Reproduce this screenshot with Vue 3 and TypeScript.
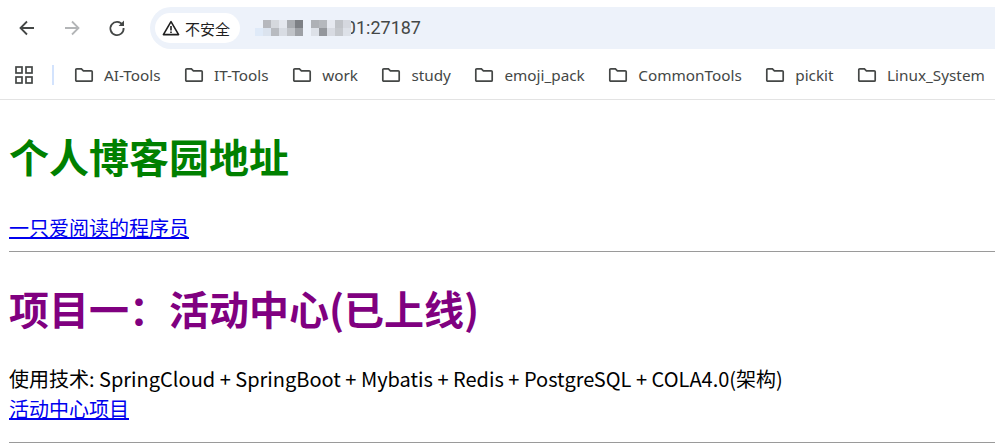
<script setup lang="ts">
const bookmarks: string[] = ['AI-Tools', 'IT-Tools', 'work', 'study', 'emoji_pack', 'CommonTools', 'pickit', 'Linux_System']
const blurCells: string[] = [
  '#edf2fa', '#b6b8bd', '#d5d8dd', '#e4e7ee', '#a9acb1', '#7d8085', '#edf2fa', '#aeb1b6', '#b5b8bd', '#e6e9f0', '#c0c3c8', '#d5d8df',
  '#dfeaf8', '#dbe3ee', '#b8bbc0', '#d8dce3', '#c0c3c8', '#9da0a5', '#edf2fa', '#dde1e8', '#94979c', '#d8dbe2', '#c5c8cd', '#dde1e8'
]
</script>

<template>
  <div class="page">
    <header class="chrome">
      <div class="nav-row">
        <button class="nav-btn" aria-label="Back">
          <svg width="20" height="20" viewBox="0 0 20 20"><path d="M17 10H4M10 3.500 3.500 10l6.500 6.500" fill="none" stroke="#444746" stroke-width="1.8"/></svg>
        </button>
        <button class="nav-btn" aria-label="Forward">
          <svg width="20" height="20" viewBox="0 0 20 20"><path d="M3 10h13M10 3.500l6.500 6.500-6.500 6.500" fill="none" stroke="#b3b5b7" stroke-width="1.8"/></svg>
        </button>
        <button class="nav-btn" aria-label="Reload">
          <svg width="20" height="20" viewBox="0 0 20 20"><path d="M15.600 7A6.600 6.600 0 1 0 16.600 10" fill="none" stroke="#444746" stroke-width="1.8"/><path d="M17 2.600V8h-5.400z" fill="#444746"/></svg>
        </button>
        <div class="omnibox">
          <div class="chip">
            <svg width="18" height="16" viewBox="0 0 18 16"><path d="M9 1.600 1.400 14.600h15.200z" fill="none" stroke="#1f1f1f" stroke-width="1.600" stroke-linejoin="round"/><path d="M9 6v4.400M9 11.400v1.600" stroke="#1f1f1f" stroke-width="1.600"/></svg>
            <span>不安全</span>
          </div>
          <div class="url">
            <span class="url-text">01:27187</span>
            <div class="blur">
              <i v-for="(color, i) in blurCells" :key="i" :style="{ background: color }"></i>
            </div>
          </div>
        </div>
      </div>
      <div class="bookmark-row">
        <svg class="apps" width="18" height="18" viewBox="0 0 18 18" fill="none" stroke="#444746" stroke-width="1.7">
          <rect x="1" y="1" width="6" height="6"/><rect x="11" y="1" width="6" height="6"/><rect x="1" y="11" width="6" height="6"/><rect x="11" y="11" width="6" height="6"/>
        </svg>
        <span class="sep"></span>
        <div v-for="b in bookmarks" :key="b" class="bookmark">
          <svg width="20" height="16" viewBox="0 0 20 16"><path d="M1.800 2.800c0-.6.4-1 1-1h4.600l2 2h7.800c.6 0 1 .4 1 1v8.400c0 .6-.4 1-1 1H2.800c-.6 0-1-.4-1-1z" fill="none" stroke="#444746" stroke-width="1.7"/></svg>
          <span>{{ b }}</span>
        </div>
      </div>
    </header>
    <main class="content">
      <h1 class="green">个人博客园地址</h1>
      <p><a href="#">一只爱阅读的程序员</a></p>
      <hr />
      <h1 class="purple">项目一：活动中心(已上线)</h1>
      <p class="tech">使用技术: SpringCloud + SpringBoot + Mybatis + Redis + PostgreSQL + COLA4.0(架构)<br /><a href="#">活动中心项目</a></p>
      <hr />
    </main>
  </div>
</template>

<style>
html, body { margin: 0; background: #fff; overflow: hidden; }
</style>

<style scoped>
.page { width: 995px; height: 448px; overflow: hidden; font-family: "Noto Sans CJK SC", "Noto Sans", sans-serif; color: #000; }
.chrome { height: 99px; border-bottom: 1px solid #e3e3e3; }
.nav-row { display: flex; align-items: center; height: 56px; padding-left: 17px; }
.nav-btn { width: 20px; height: 20px; padding: 0; border: 0; background: none; margin-right: 25px; }
.nav-btn svg { display: block; }
.nav-btn:nth-child(3) { margin-right: 23px; }
.omnibox { flex: 1; height: 42px; background: #edf2fa; border-radius: 21px 0 0 21px; display: flex; align-items: center; padding-left: 5px; }
.chip { width: 85px; height: 30px; background: #fff; border-radius: 15px; display: flex; align-items: center; gap: 5px; padding-left: 7px; box-sizing: border-box; font-size: 15px; color: #1f1f1f; }
.url { position: relative; margin-left: 15px; width: 166px; height: 24px; font-family: "Roboto", sans-serif; font-size: 18px; line-height: 24px; color: #444746; }
.url-text { position: absolute; right: 0; top: 0; }
.blur { position: absolute; left: 0; top: 4px; display: grid; grid-template-columns: repeat(12, 8px); grid-auto-rows: 8px; }
.blur i { display: block; }
.bookmark-row { display: flex; align-items: center; height: 38px; padding-left: 15px; font-family: "Noto Sans", sans-serif; font-size: 15.300px; color: #444746; }
.apps { flex: none; }
.sep { width: 2px; height: 20px; background: #d3e3fd; margin: 0 20px 0 19px; flex: none; }
.bookmark { display: flex; align-items: center; gap: 10px; margin-right: 23.500px; white-space: nowrap; }
.bookmark svg { flex: none; }
.content { padding: 0 0 0 9px; }
h1 { font-size: 40px; line-height: 54px; font-weight: 700; margin: 29px 0 0; }
.green { color: green; }
.purple { color: purple; }
p { font-size: 20px; line-height: 30px; margin: 30px 0 0; }
.tech { margin: 29px 0 18px; }
a { color: #0000ee; text-decoration: underline; }
hr { border: 0; border-top: 1px solid #9a9a9a; margin: 8px 0 0; }
</style>
